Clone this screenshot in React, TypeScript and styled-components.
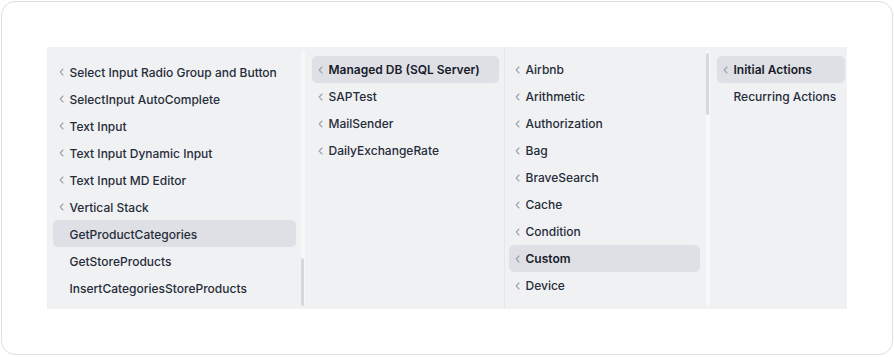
import styled, { createGlobalStyle } from "styled-components";

const GlobalStyle = createGlobalStyle`
  body {
    margin: 0;
    background: #ffffff;
    font-family: Inter, "Noto Sans", "Liberation Sans", sans-serif;
  }
`;

const StyledPage = styled.div`
  padding: 1px;
`;

const StyledCard = styled.div`
  height: 354px;
  border: 1.5px solid #dcdfe4;
  border-radius: 14px;
  padding: 44.5px 0 0 44.5px;
  box-sizing: border-box;
`;

const StyledPanel = styled.div`
  width: 800px;
  height: 262px;
  background-color: #f0f1f3;
  display: flex;
  overflow: hidden;
`;

const StyledColumn = styled.div<{ $width: number; $divider?: boolean }>`
  width: ${(p) => p.$width}px;
  flex-shrink: 0;
  display: flex;
  box-sizing: border-box;
  border-right: ${(p) => (p.$divider ? "1px solid #e4e6ea" : "none")};
`;

const StyledList = styled.div<{ $top: number; $left: number; $right: number }>`
  flex: 1;
  display: flex;
  flex-direction: column;
  padding: ${(p) => `${p.$top}px ${p.$right}px 0 ${p.$left}px`};
  overflow: hidden;
`;

const StyledItem = styled.div<{ $active?: boolean; $bold?: boolean }>`
  height: 27px;
  flex-shrink: 0;
  display: flex;
  align-items: center;
  padding: 1px 0 0 6px;
  box-sizing: border-box;
  border-radius: 5px;
  background-color: ${(p) => (p.$active ? "#dfe0e5" : "transparent")};
  color: ${(p) => (p.$bold ? "#161c2a" : "#262c3a")};
  font-size: 12px;
  font-weight: ${(p) => (p.$bold ? 600 : 500)};
  white-space: nowrap;
`;

const StyledChevron = styled.span`
  width: 11px;
  flex-shrink: 0;
  display: flex;
  align-items: center;
  color: #9ba1ab;
`;

const StyledTrack = styled.div`
  width: 4px;
  flex-shrink: 0;
  margin: 4px 0 3px;
  border-radius: 2px;
  background-color: #f8f8f9;
  position: relative;
`;

const StyledThumb = styled.div`
  position: absolute;
  left: 0.5px;
  right: 0.5px;
  border-radius: 2px;
  background-color: #d6d8dd;
`;

const Chevron = () => (
  <svg width="5" height="8" viewBox="0 0 5 8" fill="none">
    <path
      d="M4 1 L1.2 4 L4 7"
      stroke="currentColor"
      strokeWidth="1.1"
      strokeLinecap="round"
      strokeLinejoin="round"
    />
  </svg>
);

type Entry = { label: string; arrow?: boolean; active?: boolean; bold?: boolean };

const Item = ({ label, arrow = true, active, bold }: Entry) => (
  <StyledItem $active={active} $bold={bold}>
    <StyledChevron>{arrow && <Chevron />}</StyledChevron>
    {label}
  </StyledItem>
);

const col1: Entry[] = [
  { label: "Select Input Radio Group and Button" },
  { label: "SelectInput AutoComplete" },
  { label: "Text Input" },
  { label: "Text Input Dynamic Input" },
  { label: "Text Input MD Editor" },
  { label: "Vertical Stack" },
  { label: "GetProductCategories", arrow: false, active: true },
  { label: "GetStoreProducts", arrow: false },
  { label: "InsertCategoriesStoreProducts", arrow: false },
];

const col2: Entry[] = [
  { label: "Managed DB (SQL Server)", active: true, bold: true },
  { label: "SAPTest" },
  { label: "MailSender" },
  { label: "DailyExchangeRate" },
];

const col3: Entry[] = [
  { label: "Airbnb" },
  { label: "Arithmetic" },
  { label: "Authorization" },
  { label: "Bag" },
  { label: "BraveSearch" },
  { label: "Cache" },
  { label: "Condition" },
  { label: "Custom", active: true, bold: true },
  { label: "Device" },
];

const col4: Entry[] = [
  { label: "Initial Actions", active: true, bold: true },
  { label: "Recurring Actions", arrow: false },
];

const App = () => {
  return (
    <StyledPage>
      <GlobalStyle />
      <StyledCard>
        <StyledPanel>
          <StyledColumn $width={258}>
            <StyledList $top={11.5} $left={6} $right={5}>
              {col1.map((e) => (
                <Item key={e.label} {...e} />
              ))}
            </StyledList>
            <StyledTrack>
              <StyledThumb style={{ top: 207, bottom: 0 }} />
            </StyledTrack>
          </StyledColumn>
          <StyledColumn $width={200} $divider>
            <StyledList $top={9} $left={7} $right={5}>
              {col2.map((e) => (
                <Item key={e.label} {...e} />
              ))}
            </StyledList>
          </StyledColumn>
          <StyledColumn $width={206}>
            <StyledList $top={9} $left={4} $right={6}>
              {col3.map((e) => (
                <Item key={e.label} {...e} />
              ))}
            </StyledList>
            <StyledTrack>
              <StyledThumb style={{ top: 2, height: 62 }} />
            </StyledTrack>
            <div style={{ width: 1 }} />
          </StyledColumn>
          <StyledColumn $width={136}>
            <StyledList $top={9} $left={6} $right={2}>
              {col4.map((e) => (
                <Item key={e.label} {...e} />
              ))}
            </StyledList>
          </StyledColumn>
        </StyledPanel>
      </StyledCard>
    </StyledPage>
  );
};

export default App;
